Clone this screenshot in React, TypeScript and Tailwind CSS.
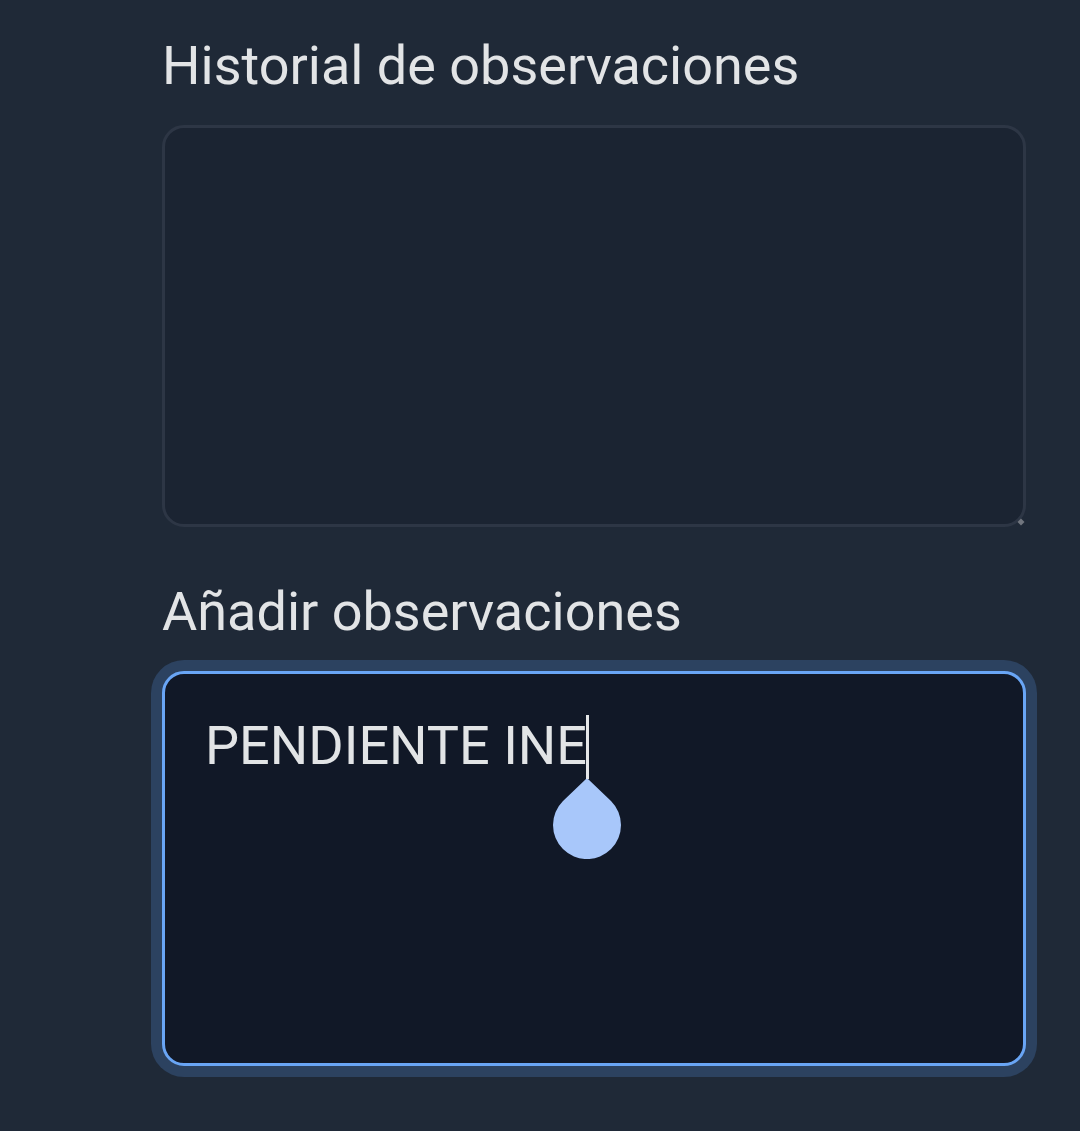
import { useState } from "react";

function ResizeGrip() {
  return (
    <svg
      aria-hidden="true"
      viewBox="0 0 8 8"
      className="pointer-events-none absolute right-px bottom-px size-2"
    >
      <path d="M4 .5 7.5 4 4 7.5.5 4Z" fill="#71767f" />
    </svg>
  );
}

function TextCursor() {
  return (
    <div
      aria-hidden="true"
      className="pointer-events-none absolute top-11 left-[391px] flex w-[68px] flex-col items-center"
    >
      <span className="h-16 w-[3px] bg-[#e5e6e8]" />
      <svg viewBox="0 0 68 80" className="h-20 w-[68px]">
        <path
          d="M33 0Q34-1 35 0L58 22A34 34 0 1 1 10 22Z"
          fill="#a8c7fa"
        />
      </svg>
    </div>
  );
}

export default function App() {
  const [history, setHistory] = useState("");
  const [notes, setNotes] = useState("PENDIENTE INE");

  return (
    <main className="flex min-h-screen flex-col gap-[53px] bg-[#1f2937] pt-[34px] pr-[54px] pb-16 pl-[162px] font-[Roboto,sans-serif] text-[54px] leading-[64px] text-[#e2e4e6]">
      <div className="flex flex-col gap-[27px]">
        <label htmlFor="history">Historial de observaciones</label>
        <div className="relative">
          <textarea
            id="history"
            value={history}
            onChange={(e) => setHistory(e.target.value)}
            className="block h-[402px] w-full resize-none rounded-[22px] border-3 border-[#2d3645] bg-[#1b2432] p-10 outline-none"
          />
          <ResizeGrip />
        </div>
      </div>
      <div className="flex flex-col gap-[27px]">
        <label htmlFor="notes">Añadir observaciones</label>
        <div className="relative">
          <textarea
            id="notes"
            value={notes}
            spellCheck={false}
            onChange={(e) => setNotes(e.target.value)}
            className="block h-[395px] w-full resize-none rounded-[22px] border-3 border-[#69a5f5] bg-[#111827] p-10 ring-11 ring-[#2c4260] outline-none"
          />
          <TextCursor />
        </div>
      </div>
    </main>
  );
}
